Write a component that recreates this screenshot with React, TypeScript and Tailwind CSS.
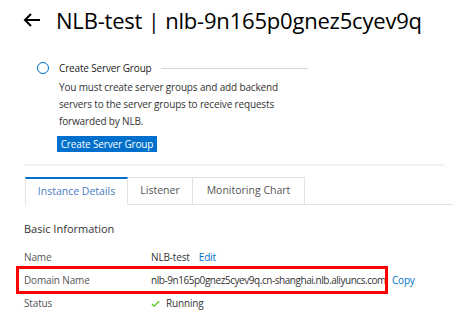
import React from "react";

const tabs = [
  { name: "Instance Details", w: "w-[103px]" },
  { name: "Listener", w: "w-[65px]" },
  { name: "Monitoring Chart", w: "w-[112px]" },
];

const rows = [
  { label: "Name", value: "NLB-test", action: "Edit" },
  { label: "Domain Name", value: "nlb-9n165p0gnez5cyev9q.cn-shanghai.nlb.aliyuncs.com", action: "Copy", boxed: true },
  { label: "Status", value: "Running", status: true },
];

const App = () => {
  return (
    <div className="w-[465px] h-[315px] overflow-hidden bg-white text-[#333] font-['Open_Sans',sans-serif]">
      <div className="flex items-center h-[38px] pl-[22px] pt-[2px]">
        <svg viewBox="0 0 20 20" className="w-[20px] h-[20px] text-black" fill="none" stroke="currentColor" strokeWidth="2">
          <path d="M18 10H3M9 4l-6 6 6 6" />
        </svg>
        <h1 className="ml-[14px] text-[22px] leading-none text-black tracking-[-0.2px]">
          NLB-test <span className="text-[#111]">|</span> nlb-9n165p0gnez5cyev9q
        </h1>
      </div>

      <div className="pl-[37px] pt-[24px]">
        <div className="flex items-center h-[12px]">
          <span className="w-[12px] h-[12px] rounded-full border-[1.5px] border-[#0070cc]" />
          <span className="ml-[10px] text-[10px] tracking-[-0.15px] text-[#222]">Create Server Group</span>
          <span className="ml-[9px] w-[147px] h-px bg-[#d9d9d9]" />
        </div>
        <p className="ml-[22px] mt-[5px] text-[10px] leading-[17px] tracking-[-0.15px] text-[#333] whitespace-nowrap">
          You must create server groups and add backend
          <br />
          servers to the server groups to receive requests
          <br />
          forwarded by NLB.
        </p>
        <button className="ml-[20px] mt-[5px] w-[100px] h-[16px] bg-[#0070cc] text-white text-[10px] tracking-[-0.15px] leading-[16px]">
          Create Server Group
        </button>
      </div>

      <div className="ml-[25px] w-[420px] mt-[10px] h-[2px] bg-[#f2f2f2]" />

      <div className="flex ml-[25px] mt-[11px] w-[428px] h-[28px] border-b border-[#e3e3e3]">
        {tabs.map((t, i) => (
          <div
            key={t.name}
            className={
              i === 0
                ? `${t.w} flex items-center justify-center border-t-2 border-t-[#0070cc] border-l border-r border-[#e3e3e3] bg-white -mb-px text-[10.5px] text-[#4a7bbf]`
                : `${t.w} flex items-center justify-center border-t border-r border-[#e3e3e3] text-[10.5px] text-[#555]`
            }
          >
            {t.name}
          </div>
        ))}
      </div>

      <div className="ml-[24px] mt-[16px] text-[11px] text-[#333]">Basic Information</div>

      <div className="mt-[8px] text-[10px] tracking-[-0.15px]">
        {rows.map((r) => (
          <div key={r.label} className="relative flex items-center h-[23px] pl-[24px]">
            {r.boxed && (
              <span className="absolute left-[16px] top-[-3px] w-[372px] h-[28px] border-[3px] border-[#ff0000]" />
            )}
            <div className="w-[127px] text-[#555]">{r.label}</div>
            {r.status ? (
              <div className="flex items-center text-[#333]">
                <svg viewBox="0 0 10 10" className="w-[9px] h-[9px]" fill="none" stroke="#52c41a" strokeWidth="1.4">
                  <path d="M1 5.5l2.5 2.5L9 2.5" />
                </svg>
                <span className="ml-[6px]">{r.value}</span>
              </div>
            ) : (
              <div className="flex items-center">
                <span className={r.boxed ? "text-[#333] tracking-[-0.45px]" : "text-[#333]"}>{r.value}</span>
                <span className={r.boxed ? "ml-[6px] text-[#0070cc]" : "ml-[9px] text-[#0070cc]"}>{r.action}</span>
              </div>
            )}
          </div>
        ))}
      </div>
    </div>
  );
};

export default App;
